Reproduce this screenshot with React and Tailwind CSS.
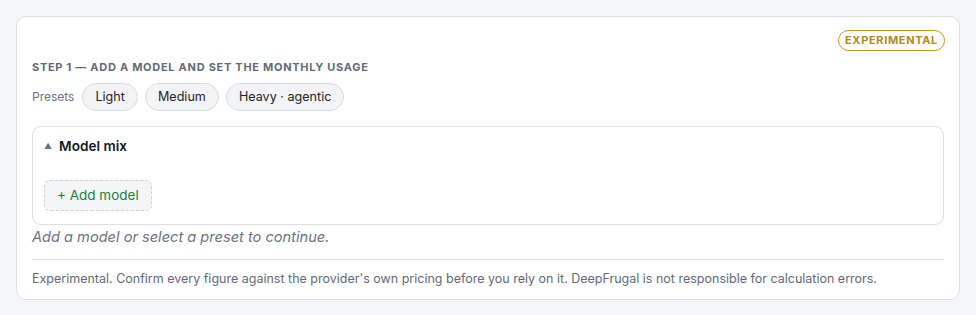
export default function App() {
  return (
    <div className="min-h-[315px] bg-[#f5f6f8] p-4" style={{ fontFamily: "Inter, 'Liberation Sans', sans-serif" }}>
      <div className="rounded-[10px] border border-[#dcdee3] bg-white px-[15px] pt-[13px] pb-[12px]">
        <div className="flex justify-end">
          <span className="mr-[-1px] rounded-full border border-[#c0961c] px-[6px] py-[2px] text-[11px] font-bold leading-[15px] tracking-[0.06em] text-[#b38a14]">
            EXPERIMENTAL
          </span>
        </div>
        <div className="mt-[8px] text-[11px] font-bold leading-[16px] tracking-[0.065em] text-[#646a75]">
          STEP 1 — ADD A MODEL AND SET THE MONTHLY USAGE
        </div>
        <div className="mt-[8px] flex items-center gap-[7px]">
          <span className="mr-[1px] text-[12px] text-[#6b7280]">Presets</span>
          {["Light", "Medium", "Heavy · agentic"].map((p) => (
            <button
              key={p}
              className="h-[28px] rounded-full border border-[#d9dbe0] bg-[#f3f4f6] px-[12px] text-[12.6px] text-[#1f2328]"
            >
              {p}
            </button>
          ))}
        </div>
        <div className="mt-[15px] rounded-[9px] border border-[#dcdee3] px-[11px] pt-[9px] pb-[13px]">
          <div className="flex items-center gap-[7px] leading-[20px]">
            <span className="text-[8px] text-[#6b7280]">▲</span>
            <span className="text-[13.6px] font-semibold text-[#16181d]">Model mix</span>
          </div>
          <button className="mt-[24px] h-[31px] rounded-[6px] border border-dashed border-[#cfd2d8] bg-[#f4f5f7] px-[12px] text-[13.5px] text-[#1a7f3c]">
            + Add model
          </button>
        </div>
        <div className="mt-[2px] text-[14.6px] italic leading-[20px] text-[#6b7280]">
          Add a model or select a preset to continue.
        </div>
        <div className="mt-[12px] border-t border-[#dcdee3] pt-[11px] text-[12.5px] leading-[16px] text-[#646a75]">
          Experimental. Confirm every figure against the provider's own pricing before you rely on it. DeepFrugal is not responsible for calculation errors.
        </div>
      </div>
    </div>
  );
}
